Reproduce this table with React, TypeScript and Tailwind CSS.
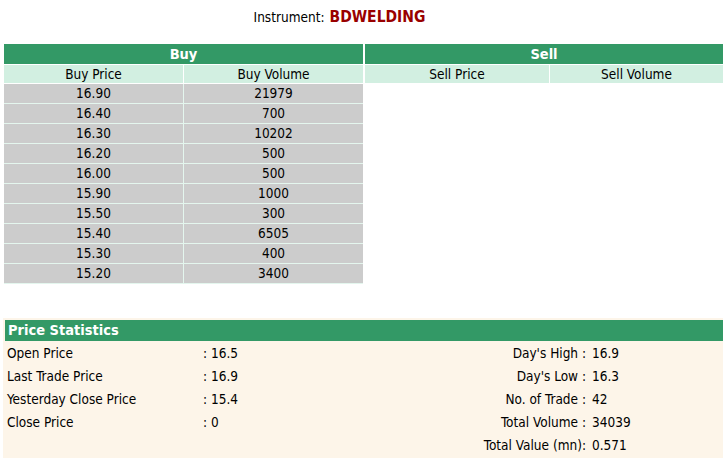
import React from "react";

const buys: [string, string][] = [
  ["16.90", "21979"],
  ["16.40", "700"],
  ["16.30", "10202"],
  ["16.20", "500"],
  ["16.00", "500"],
  ["15.90", "1000"],
  ["15.50", "300"],
  ["15.40", "6505"],
  ["15.30", "400"],
  ["15.20", "3400"],
];

const leftStats: [string, string][] = [
  ["Open Price", ": 16.5"],
  ["Last Trade Price", ": 16.9"],
  ["Yesterday Close Price", ": 15.4"],
  ["Close Price", ": 0"],
  ["", ""],
];

const rightStats: [string, string][] = [
  ["Day's High :", "16.9"],
  ["Day's Low :", "16.3"],
  ["No. of Trade :", "42"],
  ["Total Volume :", "34039"],
  ["Total Value (mn):", "0.571"],
];

export default function App() {
  return (
    <div
      className="w-[723px] h-[463px] bg-white text-[13.5px] text-black overflow-hidden"
      style={{ fontFamily: '"DejaVu Sans Condensed", "DejaVu Sans", sans-serif' }}
    >
      <div className="h-[44px] flex justify-center items-start pt-[7px] pr-[44px]">
        <span className="leading-[20px]">Instrument: </span>
        <span className="ml-[5px] font-bold text-[15.5px] leading-[20px] text-[#990000]">BDWELDING</span>
      </div>

      <div className="flex pl-[4px] items-start">
        <div className="w-[359px] flex flex-col gap-px">
          <div className="h-[20px] bg-[#339966] text-white font-bold text-[14.5px] leading-[20px] text-center">Buy</div>
          <div className="grid grid-cols-[179px_179px] gap-px">
            <div className="h-[18px] bg-[#d2efe1] leading-[18px] text-center">Buy Price</div>
            <div className="h-[18px] bg-[#d2efe1] leading-[18px] text-center">Buy Volume</div>
          </div>
          <div className="grid grid-cols-[179px_179px] gap-px bg-[#e4f6ee] pb-px">
            {buys.map(([p, v], i) => (
              <React.Fragment key={i}>
                <div className="h-[19px] bg-[#cccccc] leading-[19px] text-center">{p}</div>
                <div className="h-[19px] bg-[#cccccc] leading-[19px] text-center">{v}</div>
              </React.Fragment>
            ))}
          </div>
        </div>
        <div className="w-[358px] ml-[2px] flex flex-col gap-px">
          <div className="h-[20px] bg-[#339966] text-white font-bold text-[14.5px] leading-[20px] text-center">Sell</div>
          <div className="grid grid-cols-[184px_173px] gap-px">
            <div className="h-[18px] bg-[#d2efe1] leading-[18px] text-center">Sell Price</div>
            <div className="h-[18px] bg-[#d2efe1] leading-[18px] text-center">Sell Volume</div>
          </div>
        </div>
      </div>

      <div className="ml-[3px] mt-[34px] w-[720px] h-[140px] bg-[#fdf5e9] p-[2px] pr-0">
        <div className="h-[21px] bg-[#339966] text-white font-bold text-[14.5px] leading-[21px] pl-[3px]">Price Statistics</div>
        <div className="grid grid-cols-[198px_180px_1fr_131px] mt-px">
          {rightStats.map((r, i) => (
            <React.Fragment key={i}>
              <div className="h-[23px] leading-[23px] pl-[2px]">{leftStats[i][0]}</div>
              <div className="h-[23px] leading-[23px]">{leftStats[i][1]}</div>
              <div className="h-[23px] leading-[23px] text-right pr-[6px]">{r[0]}</div>
              <div className="h-[23px] leading-[23px]">{r[1]}</div>
            </React.Fragment>
          ))}
        </div>
      </div>
    </div>
  );
}
